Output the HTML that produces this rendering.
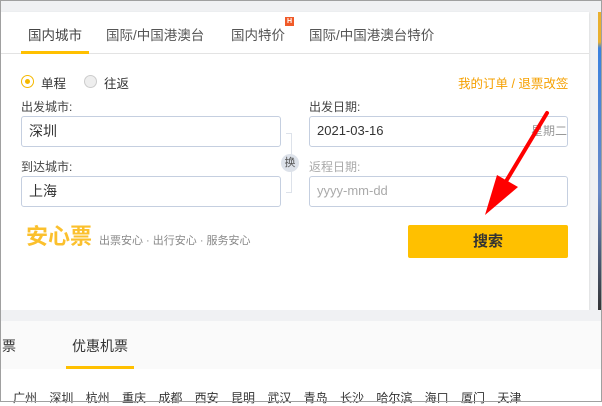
<!DOCTYPE html>
<html><head><meta charset="utf-8"><style>
*{margin:0;padding:0;box-sizing:border-box}
body{width:602px;height:402px;overflow:hidden;position:relative;background:#fff;font-family:"Liberation Sans","Noto Sans CJK SC",sans-serif;color:#333}
.a{position:absolute;white-space:nowrap}
.inp{position:absolute;border:1px solid #c5cfe0;border-radius:3px;background:#fff;font-size:14px;padding-left:7px;line-height:28px}
</style></head><body>
<div class="a" style="left:0;top:0;width:602px;height:402px;border:1px solid #a0a0a0;z-index:10"></div>
<div class="a" style="left:0;top:0;width:602px;height:12px;background:#f0f1f3"></div>
<div class="a" style="left:589px;top:12px;width:13px;height:300px;background:#f0f1f3"></div>
<div class="a" style="left:598px;top:12px;width:4px;height:300px;background:linear-gradient(#e9b030 0,#e9b030 10%,#3a82e0 12%,#6a8ac8 60%,#333 100%)"></div>
<div class="a" style="left:1px;top:12px;width:588px;height:298px;background:#fff;box-shadow:0 1px 2px #ccc"></div>
<div class="a" style="left:1px;top:53px;width:588px;height:1px;background:#e3e3e3"></div>
<div class="a" style="left:28px;top:24px;font-size:13.5px;color:#444">国内城市</div>
<div class="a" style="left:21px;top:51px;width:68px;height:3px;background:#ffc000"></div>
<div class="a" style="left:106px;top:24px;font-size:13.5px;color:#555">国际/中国港澳台</div>
<div class="a" style="left:231px;top:24px;font-size:13.5px;color:#555">国内特价</div>
<div class="a" style="left:285px;top:17px;width:9px;height:9px;background:#f05a28;color:#fff;font-size:7px;font-weight:bold;text-align:center;line-height:9px">H</div>
<div class="a" style="left:309px;top:24px;font-size:13.5px;color:#555">国际/中国港澳台特价</div>
<div class="a" style="left:21px;top:75px;width:13px;height:13px;border:1px solid #f5b800;border-radius:50%"></div>
<div class="a" style="left:25px;top:79px;width:5px;height:5px;background:#f5b800;border-radius:50%"></div>
<div class="a" style="left:41px;top:73px;font-size:12.5px">单程</div>
<div class="a" style="left:84px;top:75px;width:13px;height:13px;border:1px solid #ccc;border-radius:50%;background:#eee"></div>
<div class="a" style="left:104px;top:73px;font-size:12.5px">往返</div>
<div class="a" style="left:458px;top:73px;font-size:12.5px;color:#f5a000">我的订单 / 退票改签</div>
<div class="a" style="left:21px;top:98px;font-size:12px;color:#444">出发城市:</div>
<div class="inp" style="left:21px;top:116px;width:260px;height:31px">深圳</div>
<div class="a" style="left:309px;top:98px;font-size:12px;color:#444">出发日期:</div>
<div class="inp" style="left:309px;top:116px;width:259px;height:31px;font-size:13px">2021-03-16<span style="position:absolute;right:0;color:#999;font-size:12px">星期二</span></div>
<div class="a" style="left:21px;top:158px;font-size:12px;color:#444">到达城市:</div>
<div class="inp" style="left:21px;top:176px;width:260px;height:31px">上海</div>
<div class="a" style="left:309px;top:158px;font-size:12px;color:#aaa">返程日期:</div>
<div class="inp" style="left:309px;top:176px;width:259px;height:31px;color:#aaa;font-size:13px">yyyy-mm-dd</div>
<div class="a" style="left:286px;top:133px;width:6px;height:60px;border:1px solid #dde2ea;border-left:none"></div>
<div class="a" style="left:281px;top:154px;width:18px;height:18px;border-radius:50%;background:#dde2ea;font-size:11px;text-align:center;line-height:18px;color:#555">换</div>
<div class="a" style="left:26px;top:224px;font-size:22px;font-weight:bold;color:#fbc02d;line-height:26px">安心票</div>
<div class="a" style="left:99px;top:232px;font-size:11px;color:#888">出票安心 · 出行安心 · 服务安心</div>
<div class="a" style="left:408px;top:225px;width:160px;height:33px;background:#ffc000;border-radius:2px;text-align:center;line-height:33px;font-size:15px;font-weight:bold;color:#333">搜索</div>
<svg class="a" style="left:0;top:0;z-index:5" width="602" height="402"><line x1="547" y1="113" x2="505" y2="183" stroke="#f00" stroke-width="4" stroke-linecap="round"/><polygon points="485,215 497,175 518,187" fill="#f00"/></svg>
<div class="a" style="left:1px;top:310px;width:600px;height:11px;background:#f0f1f3"></div>
<div class="a" style="left:1px;top:321px;width:600px;height:48px;background:#fafafa"></div>
<div class="a" style="left:2px;top:336px;font-size:14px">票</div>
<div class="a" style="left:72px;top:336px;font-size:14px">优惠机票</div>
<div class="a" style="left:66px;top:366px;width:68px;height:3px;background:#ffc000"></div>
<div class="a" style="left:13px;top:389px;font-size:12px;word-spacing:9px">广州 深圳 杭州 重庆 成都 西安 昆明 武汉 青岛 长沙 哈尔滨 海口 厦门 天津</div>
</body></html>
